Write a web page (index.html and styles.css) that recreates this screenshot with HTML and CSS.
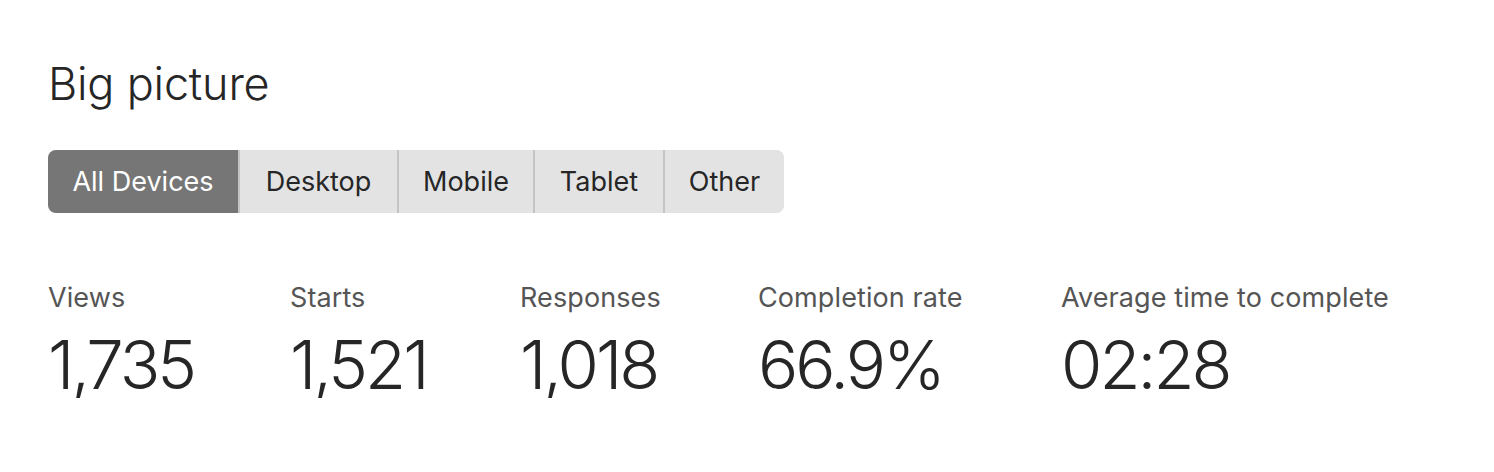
FILE: index.html
```html
<!DOCTYPE html>
<html>
<head>
<meta charset="utf-8">
<link rel="stylesheet" href="styles.css">
</head>
<body>
<section class="panel">
  <h2 class="title">Big picture</h2>
  <div class="tabs">
    <button class="tab active">All Devices</button>
    <button class="tab">Desktop</button>
    <button class="tab">Mobile</button>
    <button class="tab">Tablet</button>
    <button class="tab">Other</button>
  </div>
  <div class="stats">
    <div class="stat s1"><div class="label">Views</div><div class="value">1,735</div></div>
    <div class="stat s2"><div class="label">Starts</div><div class="value">1,521</div></div>
    <div class="stat s3"><div class="label">Responses</div><div class="value">1,018</div></div>
    <div class="stat s4"><div class="label">Completion rate</div><div class="value">66.9%</div></div>
    <div class="stat s5"><div class="label">Average time to complete</div><div class="value">02:28</div></div>
  </div>
</section>
</body>
</html>
```
FILE: styles.css
```css
html, body {
  margin: 0;
  padding: 0;
  background: #ffffff;
}
body {
  font-family: Inter, "Noto Sans", sans-serif;
  color: #262627;
}
.panel {
  padding: 55px 48px 0 48px;
}
.title {
  margin: 0;
  font-size: 45px;
  font-weight: 300;
  line-height: 57px;
  letter-spacing: -0.2px;
  color: #262627;
}
.tabs {
  margin-top: 38px;
  display: flex;
  width: max-content;
  border-radius: 8px;
  overflow: hidden;
  background: #e3e3e3;
}
.tab {
  border: 0;
  margin: 0;
  height: 63px;
  padding: 0;
  background: #e3e3e3;
  font-family: Inter, "Noto Sans", sans-serif;
  font-size: 27px;
  font-weight: 400;
  color: #262627;
  border-left: 2px solid #c4c4c4;
}
.tab:first-child { border-left: 0; }
.tab:nth-child(1) { width: 190px; }
.tab:nth-child(2) { width: 159px; }
.tab:nth-child(3) { width: 136px; }
.tab:nth-child(4) { width: 130px; }
.tab:nth-child(5) { width: 121px; }
.tab.active {
  background: #767676;
  color: #ffffff;
}
.stats {
  margin-top: 69px;
  display: grid;
  grid-template-columns: 242px 230px 238px 303px auto;
}
.label {
  font-size: 27px;
  line-height: 32px;
  color: #555555;
  font-weight: 400;
  letter-spacing: 0.1px;
}
.value {
  margin-top: 18px;
  font-size: 67px;
  line-height: 66px;
  font-weight: 300;
  color: #262627;
  letter-spacing: -3px;
}
```
